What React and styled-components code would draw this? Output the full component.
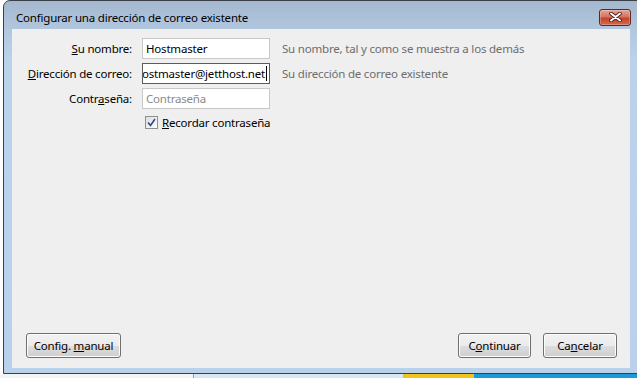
import styled, { createGlobalStyle } from "styled-components";

const Global = createGlobalStyle`
  html, body {
    margin: 0;
    padding: 0;
    background: #ffffff;
    overflow: hidden;
  }
  body {
    font-family: "Noto Sans", "Open Sans", sans-serif;
    font-size: 11.5px;
    letter-spacing: -0.2px;
    color: #000;
  }
`;

const Desktop = styled.div`
  width: 637px;
  height: 378px;
  overflow: hidden;
  display: flex;
  flex-direction: column;
`;

const Window = styled.div`
  margin-left: 3px;
  width: 645px;
  height: 374px;
  box-sizing: border-box;
  border: 1px solid #3a3f48;
  border-radius: 7px 7px 0 0;
  background: linear-gradient(to bottom, #a4b9d0 0px, #b1c7de 28px, #bad2ea 60px, #b9d1ea 100%);
  display: flex;
  flex-direction: column;
  padding: 0 17px 5px 8px;
`;

const TitleBar = styled.div`
  height: 28px;
  display: flex;
  align-items: center;
  justify-content: space-between;
  padding-left: 4px;
`;

const Title = styled.div`
  font-size: 11.5px;
  color: #000;
  padding-top: 4px;
`;

const CloseButton = styled.div`
  width: 32px;
  height: 17px;
  margin-top: 4px;
  margin-right: -1px;
  box-sizing: border-box;
  border: 1px solid #5a2a22;
  border-radius: 3px;
  background: linear-gradient(to bottom, #e8a493 0%, #d5735f 45%, #c2442c 55%, #d36a4f 100%);
  display: flex;
  align-items: center;
  justify-content: center;
  box-shadow: inset 0 0 0 1px rgba(255, 255, 255, 0.25);
`;

const Content = styled.div`
  flex: 1;
  background: #efefef;
  display: flex;
  flex-direction: column;
  justify-content: space-between;
  padding: 9px 0 10px 0;
`;

const Form = styled.div`
  display: grid;
  grid-template-columns: 120px 128px auto;
  column-gap: 10px;
  row-gap: 4px;
  align-items: center;
`;

const Label = styled.label`
  text-align: right;
  white-space: nowrap;
`;

const Input = styled.div`
  height: 21px;
  box-sizing: border-box;
  background: #fff;
  border: 1px solid ${(p) => (p.$focused ? "#5c5c5c" : "#c8c8c8")};
  display: flex;
  align-items: center;
  padding: 0 2px 0 3px;
  overflow: hidden;
  white-space: nowrap;
  color: ${(p) => (p.$placeholder ? "#8a8a8a" : "#000")};
  justify-content: ${(p) => (p.$scrolled ? "flex-end" : "flex-start")};
`;

const Caret = styled.span`
  display: inline-block;
  flex: none;
  width: 1px;
  height: 15px;
  background: #000;
  margin-left: 1px;
`;

const Hint = styled.div`
  color: #6d6d6d;
  white-space: nowrap;
  padding-left: 2px;
`;

const CheckRow = styled.div`
  grid-column: 2 / 4;
  display: flex;
  align-items: center;
  gap: 4px;
  padding-left: 3px;
  margin-top: 2px;
`;

const CheckBox = styled.div`
  width: 13px;
  height: 13px;
  box-sizing: border-box;
  border: 1px solid #8e8f8f;
  background: linear-gradient(135deg, #dcdcdc, #ffffff);
  display: flex;
  align-items: center;
  justify-content: center;
`;

const Buttons = styled.div`
  display: flex;
  align-items: center;
  padding: 0 13px 0 14px;
`;

const Spacer = styled.div`
  flex: 1;
`;

const Button = styled.div`
  height: 25px;
  width: ${(p) => p.$w}px;
  margin-left: ${(p) => p.$ml || 0}px;
  box-sizing: border-box;
  border: 1px solid #707070;
  border-radius: 3px;
  background: linear-gradient(to bottom, #f2f2f2 0%, #ebebeb 50%, #dddddd 51%, #cfcfcf 100%);
  box-shadow: inset 0 0 0 1px #fcfcfc;
  display: flex;
  align-items: center;
  justify-content: center;
`;

const Taskbar = styled.div`
  height: 4px;
  display: flex;
`;

const Segment = styled.div`
  width: ${(p) => (p.$w ? `${p.$w}px` : "auto")};
  flex: ${(p) => (p.$w ? "none" : 1)};
  background: ${(p) => p.$bg};
  border-left: ${(p) => (p.$line ? "1px solid #9a9a9a" : "none")};
`;

export default function App() {
  return (
    <>
      <Global />
      <Desktop>
        <Window>
          <TitleBar>
            <Title>Configurar una dirección de correo existente</Title>
            <CloseButton>
              <svg width="13" height="10" viewBox="0 0 13 10">
                <path
                  d="M2 1.5 L11 8.5 M11 1.5 L2 8.5"
                  stroke="#4a1a12"
                  strokeWidth="3.6"
                  strokeLinecap="round"
                />
                <path
                  d="M2 1.5 L11 8.5 M11 1.5 L2 8.5"
                  stroke="#ffffff"
                  strokeWidth="2"
                  strokeLinecap="round"
                />
              </svg>
            </CloseButton>
          </TitleBar>
          <Content>
            <Form>
              <Label>
                <u>S</u>u nombre:
              </Label>
              <Input>Hostmaster</Input>
              <Hint>Su nombre, tal y como se muestra a los demás</Hint>

              <Label>
                <u>D</u>irección de correo:
              </Label>
              <Input $focused $scrolled>
                ostmaster@jetthost.net
                <Caret />
              </Input>
              <Hint>Su dirección de correo existente</Hint>

              <Label>
                Contr<u>a</u>seña:
              </Label>
              <Input $placeholder>Contraseña</Input>
              <div />

              <CheckRow>
                <CheckBox>
                  <svg width="9" height="9" viewBox="0 0 9 9">
                    <path d="M1 4.5 L3.5 7.5 L8 1" stroke="#2a4a8c" strokeWidth="1.6" fill="none" />
                  </svg>
                </CheckBox>
                <span>
                  <u>R</u>ecordar contraseña
                </span>
              </CheckRow>
            </Form>
            <Buttons>
              <Button $w={95}>
                <span>
                  Config. <u>m</u>anual
                </span>
              </Button>
              <Spacer />
              <Button $w={73}>
                <span>
                  C<u>o</u>ntinuar
                </span>
              </Button>
              <Button $w={74} $ml={12}>
                <span>
                  Ca<u>n</u>celar
                </span>
              </Button>
            </Buttons>
          </Content>
        </Window>
        <Taskbar>
          <Segment $w={193} $bg="#f4f4f4" />
          <Segment $w={209} $bg="#d8e8f2" $line />
          <Segment $w={71} $bg="#f2c418" />
          <Segment $bg="#1c9ad6" />
        </Taskbar>
      </Desktop>
    </>
  );
}
